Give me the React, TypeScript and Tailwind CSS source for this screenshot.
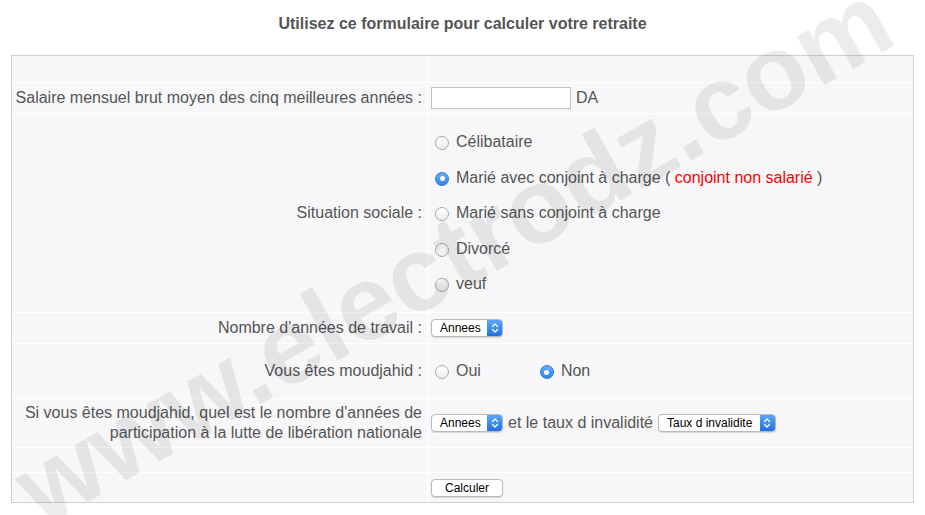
import React from "react";

function Radio({ checked }: { checked?: boolean }) {
  if (checked) {
    return (
      <span className="inline-flex h-[14px] w-[14px] shrink-0 items-center justify-center rounded-full bg-gradient-to-b from-[#6aaef7] to-[#2f83ec] border border-[#2a78de]">
        <span className="h-[5px] w-[5px] rounded-full bg-white" />
      </span>
    );
  }
  return (
    <span className="inline-block h-[14px] w-[14px] shrink-0 rounded-full border border-[#a9a9a9] bg-gradient-to-b from-white to-[#ececec]" />
  );
}

function Select({ label, width }: { label: string; width: string }) {
  return (
    <span
      className={`inline-flex h-[18px] items-stretch rounded-[4px] border border-[#b9b9b9] bg-white shadow-[0_1px_1px_rgba(0,0,0,0.12)] ${width}`}
    >
      <span className="flex flex-1 items-center pl-[8px] text-[12px] leading-none text-black">{label}</span>
      <span className="flex w-[15px] items-center justify-center rounded-r-[3px] bg-gradient-to-b from-[#5aa6f7] to-[#1f72e6]">
        <svg width="8" height="12" viewBox="0 0 8 12" fill="none">
          <path d="M1.5 4.5 L4 2 L6.5 4.5" stroke="white" strokeWidth="1.3" strokeLinecap="round" strokeLinejoin="round" />
          <path d="M1.5 7.5 L4 10 L6.5 7.5" stroke="white" strokeWidth="1.3" strokeLinecap="round" strokeLinejoin="round" />
        </svg>
      </span>
    </span>
  );
}

function Opt({ checked, children }: { checked?: boolean; children: React.ReactNode }) {
  return (
    <div className="flex h-[20px] items-center">
      <span className="ml-[4px] mr-[7px] mt-[2px] flex">
        <Radio checked={checked} />
      </span>
      <span>{children}</span>
    </div>
  );
}

export default function App() {
  const cellL = "bg-[#f7f7f9] flex items-center justify-end pr-[5px] text-right";
  const cellR = "bg-[#f7f7f9] flex items-center pl-[3px]";
  return (
    <div
      className="relative h-[515px] w-[925px] overflow-hidden bg-white text-[16px] text-[#555]"
      style={{ fontFamily: '"Liberation Sans", Arial, sans-serif' }}
    >
      <div className="pt-[15px] text-center text-[16px] font-bold leading-[18px] text-[#555]">
        Utilisez ce formulaire pour calculer votre retraite
      </div>
      <div className="mx-[11px] mt-[22px] border border-[#cfcfcf]">
        <div className="grid grid-cols-[415px_1fr] grid-rows-[26px_30px_198px_30px_54px_48px_24px_29px] gap-px bg-white">
          <div className={cellL} />
          <div className={cellR} />

          <div className={cellL}>Salaire mensuel brut moyen des cinq meilleures années :</div>
          <div className={cellR}>
            <span className="h-[22px] w-[140px] border border-[#c2c2c2] bg-white" />
            <span className="ml-[5px]">DA</span>
          </div>

          <div className={cellL}>Situation sociale :</div>
          <div className={`${cellR} `}>
            <div className="flex flex-col gap-[15.5px]">
              <Opt>Célibataire</Opt>
              <Opt checked>
                Marié avec conjoint à charge ( <span className="text-[#f00]">conjoint non salarié</span> )
              </Opt>
              <Opt>Marié sans conjoint à charge</Opt>
              <Opt>Divorcé</Opt>
              <Opt>veuf</Opt>
            </div>
          </div>

          <div className={cellL}>Nombre d'années de travail :</div>
          <div className={cellR}>
            <Select label="Annees" width="w-[72px]" />
          </div>

          <div className={cellL}>Vous êtes moudjahid :</div>
          <div className={cellR}>
            <Opt>Oui</Opt>
            <span className="ml-[55px]">
              <Opt checked>Non</Opt>
            </span>
          </div>

          <div className={`${cellL} leading-[20px]`}>
            Si vous êtes moudjahid, quel est le nombre d'années de
            <br />
            participation à la lutte de libération nationale
          </div>
          <div className={cellR}>
            <Select label="Annees" width="w-[72px]" />
            <span className="ml-[5px] mr-[5px]">et le taux d invalidité</span>
            <Select label="Taux d invalidite" width="w-[118px]" />
          </div>

          <div className={cellL} />
          <div className={cellR} />

          <div className={cellL} />
          <div className={cellR}>
            <span className="flex h-[18px] w-[72px] items-center justify-center rounded-[4px] border border-[#b9b9b9] bg-white text-[12px] text-black shadow-[0_1px_1px_rgba(0,0,0,0.12)]">
              Calculer
            </span>
          </div>
        </div>
      </div>

      <div className="pointer-events-none absolute inset-0 flex items-center justify-center">
        <div className="translate-x-[-10px] translate-y-[-5px] -rotate-[29.5deg] whitespace-nowrap text-[106px] font-bold leading-none text-[rgba(0,0,0,0.075)]">
          www.electrodz.com
        </div>
      </div>
    </div>
  );
}
